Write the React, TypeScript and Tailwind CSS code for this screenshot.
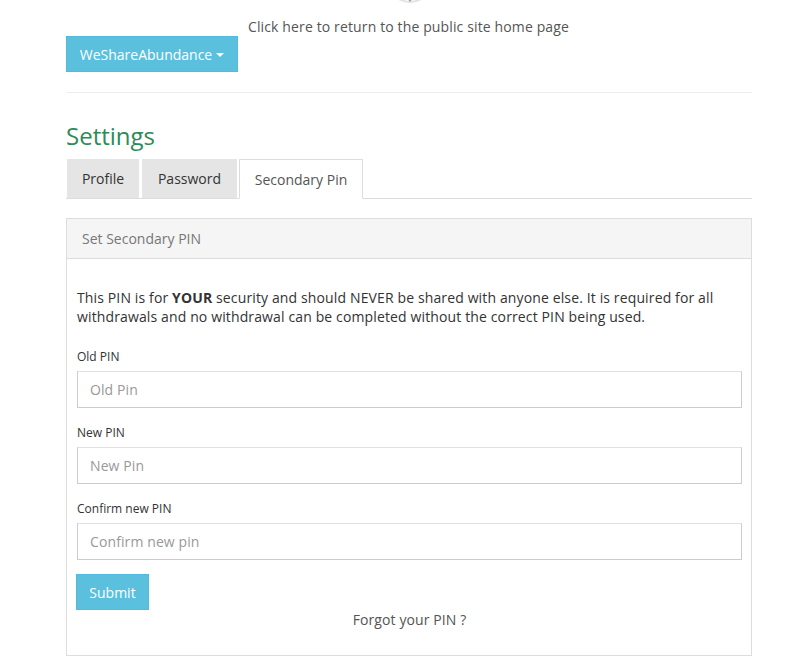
import React from "react";

const font = { fontFamily: '"Open Sans", "Liberation Sans", sans-serif' };

function Field({ label, placeholder }: { label: string; placeholder: string }) {
  return (
    <div className="flex flex-col">
      <label className="text-[12px] leading-[17px] text-[#333] mb-[6px]">{label}</label>
      <input
        className="h-[37px] w-full border border-[#ccc] border-t-[#e0e0e0] bg-white px-3 text-[14px] tracking-[0.1px] text-[#555] placeholder:text-[#999] outline-none"
        placeholder={placeholder}
        style={font}
      />
    </div>
  );
}

export default function App() {
  return (
    <div className="min-h-[670px] bg-white text-[#333]" style={font}>
      <div className="w-[686px] ml-[66px]">
        <div className="relative h-[17px]">
          <svg className="absolute left-[324px] top-[-8px]" width="40" height="14" viewBox="0 0 40 14">
            <path d="M4 4 Q20 16 36 4" stroke="#e2e2e2" strokeWidth="2" fill="none" />
            <path d="M14 2 L20 8 L26 2" stroke="#a0a0a0" strokeWidth="2.5" fill="none" />
          </svg>
        </div>
        <div className="text-center text-[14px] leading-[20px] tracking-[0.13px] text-[#555] ml-[-1px]">
          Click here to return to the public site home page
        </div>
        <div className="mt-[-1px]">
          <button className="h-[36px] w-[172px] bg-[#5bc0de] text-white text-[14px] flex items-center justify-center gap-[4px] border border-dotted border-[#46b8da]" style={font}>
            WeShareAbundance
            <span className="inline-block w-0 h-0 border-l-[4px] border-r-[4px] border-t-[4px] border-l-transparent border-r-transparent border-t-white mt-[1px]" />
          </button>
        </div>
        <div className="mt-[20px] border-t border-[#eee]" />
        <h2 className="mt-[28px] text-[24px] leading-[30px] text-[#2e8b57]">Settings</h2>
        <div className="mt-[8px] flex border-b border-[#ddd] h-[40px]">
          <div className="ml-[1px] w-[72px] h-[39px] bg-[#e5e5e5] flex items-center justify-center text-[14px] text-[#333]">Profile</div>
          <div className="ml-[3px] w-[95px] h-[39px] bg-[#e5e5e5] flex items-center justify-center text-[14px] text-[#333]">Password</div>
          <div className="ml-[2px] w-[124px] h-[40px] bg-white border border-[#ddd] border-b-white flex items-center justify-center text-[14px] text-[#555]">Secondary Pin</div>
        </div>
        <div className="mt-[19px] border border-[#ddd]">
          <div className="h-[40px] bg-[#f5f5f5] border-b border-[#ddd] flex items-center px-[15px] text-[14px] text-[#777]">
            Set Secondary PIN
          </div>
          <div className="pl-[10px] pr-[9px] pt-[29px] pb-[25px]">
            <p className="text-[14px] leading-[19px] tracking-[0.13px] text-[#333] pr-[11px]">
              This PIN is for <b>YOUR</b> security and should NEVER be shared with anyone else. It is required for all withdrawals and no withdrawal can be completed without the correct PIN being used.
            </p>
            <div className="mt-[22px] flex flex-col gap-[16px]">
              <Field label="Old PIN" placeholder="Old Pin" />
              <Field label="New PIN" placeholder="New Pin" />
              <Field label="Confirm new PIN" placeholder="Confirm new pin" />
            </div>
            <button className="mt-[14px] ml-[-1px] h-[36px] w-[73px] bg-[#5bc0de] text-white text-[14px] border border-dotted border-[#46b8da]" style={font}>
              Submit
            </button>
            <div className="text-center text-[14px] leading-[20px] tracking-[0.1px] text-[#555]">Forgot your PIN ?</div>
          </div>
        </div>
      </div>
    </div>
  );
}
